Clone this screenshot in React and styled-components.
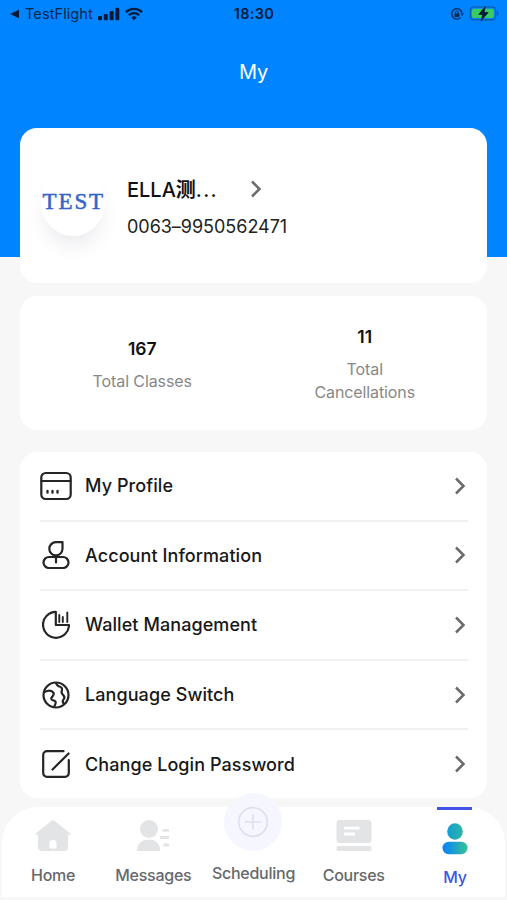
import React from "react";
import styled, { createGlobalStyle } from "styled-components";

const GlobalStyle = createGlobalStyle`
  *, *::before, *::after { box-sizing: border-box; }
  body { margin: 0; background: #f7f7f7; font-family: Inter, "Noto Sans CJK SC", sans-serif; }
  svg { display: block; flex: none; }
`;

const Screen = styled.main`
  width: 507px;
  height: 900px;
  overflow: hidden;
  display: flex;
  flex-direction: column;
  background: #f7f7f7;
`;

const Hero = styled.header`
  height: 257px;
  flex: none;
  background: #0084ff;
`;

const StatusBar = styled.div`
  height: 28px;
  padding: 0 8px 0 9px;
  display: grid;
  grid-template-columns: 1fr auto 1fr;
  align-items: center;
  color: #06264d;
`;

const StatusGroup = styled.div`
  display: flex;
  align-items: center;
  gap: ${(p) => p.$gap}px;
  justify-content: ${(p) => (p.$end ? "flex-end" : "flex-start")};
`;

const Carrier = styled.span`
  font-size: 14.5px;
  line-height: 28px;
  letter-spacing: 0.1px;
`;

const Clock = styled.span`
  font-size: 14.5px;
  font-weight: 600;
  line-height: 28px;
  letter-spacing: 0.35px;
  color: #031b38;
`;

const Title = styled.h1`
  margin: 32px 0 0;
  text-align: center;
  font-size: 20px;
  line-height: 25px;
  font-weight: 400;
  letter-spacing: -0.3px;
  color: #fff;
`;

const Card = styled.section`
  width: 467px;
  flex: none;
  margin: 0 auto;
  background: #fff;
  border-radius: 17px;
`;

const ProfileCard = styled(Card)`
  height: 155px;
  margin-top: -129px;
  padding: 42px 20px 0 21px;
  display: flex;
  align-items: flex-start;
`;

const Avatar = styled.div`
  width: 64px;
  height: 66px;
  border-radius: 50%;
  display: flex;
  align-items: center;
  justify-content: center;
  padding-bottom: 2px;
  background: #fff;
  box-shadow: 0 13px 18px -3px rgba(70, 80, 105, 0.1);
  font-family: "Liberation Serif", serif;
  font-size: 23px;
  letter-spacing: 1.9px;
  text-indent: 1.5px;
  color: #3464c8;
  -webkit-text-stroke: 0.5px #3464c8;
`;

const Identity = styled.div`
  margin: 6px 0 0 22px;
`;

const NameLine = styled.div`
  display: flex;
  align-items: center;
  height: 26px;
  gap: 29px;
`;

const Name = styled.span`
  width: 94px;
  padding-top: 1px;
  white-space: nowrap;
  font-size: 20px;
  font-weight: 500;
  line-height: 26px;
  color: #111;
`;

const NameHan = styled.span`
  font-family: "Noto Sans CJK SC", sans-serif;
  font-weight: 700;
`;

const NameDots = styled.span`
  letter-spacing: 1.3px;
`;

const Phone = styled.div`
  margin-top: 13px;
  font-size: 18px;
  line-height: 24px;
  letter-spacing: -0.03px;
  color: #222;
`;

const StatsCard = styled(Card)`
  height: 134px;
  margin-top: 13px;
  padding: 4px 11px 0;
  display: grid;
  grid-template-columns: 1fr 1fr;
  align-items: center;
`;

const Stat = styled.div`
  display: flex;
  flex-direction: column;
  align-items: center;
  text-align: center;
  gap: 10px;
`;

const StatValue = styled.strong`
  font-size: 17.5px;
  font-weight: 600;
  line-height: 22px;
  color: #111;
`;

const StatLabel = styled.span`
  width: 112px;
  font-size: 16px;
  line-height: 23px;
  letter-spacing: -0.1px;
  color: #888;
`;

const MenuCard = styled(Card)`
  height: 346px;
  margin-top: 22px;
  padding: 0 19px 0 20px;
`;

const MenuRow = styled.div`
  height: ${(p) => (p.$last ? "67.6px" : "69.6px")};
  padding-right: 2px;
  display: flex;
  align-items: center;
  border-bottom: ${(p) => (p.$last ? "0" : "2px")} solid #f1f1f1;
`;

const MenuIcon = styled.span`
  width: 32px;
  margin-right: 13px;
  display: flex;
  justify-content: center;
`;

const MenuLabel = styled.span`
  flex: 1;
  font-size: 18px;
  font-weight: 500;
  letter-spacing: 0.08px;
  color: #181818;
`;

const TabBar = styled.nav`
  width: 503px;
  height: 92px;
  flex: none;
  margin: 9px auto 0;
  padding: 0 1px;
  display: grid;
  grid-template-columns: repeat(5, 1fr);
  background: #fff;
  border-radius: 36px 36px 0 0;
  border-bottom: 2px solid #f8f8f8;
`;

const Tab = styled.div`
  display: flex;
  flex-direction: column;
  align-items: center;
  padding-top: ${(p) => p.$top || 0}px;
  padding-left: ${(p) => (p.$active ? 2 : 0)}px;
  color: ${(p) => (p.$active ? "#3855e5" : "#65686c")};
`;

const TabLabel = styled.span`
  margin-top: 12px;
  font-size: 16px;
  line-height: 20px;
  font-weight: 500;
  letter-spacing: -0.25px;
`;

const ActiveLine = styled.span`
  width: 35px;
  height: 3px;
  margin-bottom: 13px;
  background: #4054e6;
`;

const PlusDisc = styled.span`
  width: 58px;
  height: 58px;
  margin-top: -14px;
  border-radius: 50%;
  display: grid;
  place-items: center;
  background: #f5f6ff;
  flex: none;
`;

const Chevron = () => (
  <svg width="12" height="18" viewBox="0 0 12 18" fill="none" stroke="#6b6b6b" strokeWidth="2.5">
    <path d="M2 1.5 9.5 9 2 16.5" />
  </svg>
);

const line = { fill: "none", stroke: "#252525", strokeWidth: 2.2, strokeLinecap: "round", strokeLinejoin: "round" };

const CardIcon = () => (
  <svg width="32" height="30" viewBox="0 0 32 30" {...line}>
    <rect x="1.3" y="2" width="29.4" height="26" rx="4.5" />
    <path d="M1.5 10h29" />
    <path d="M7.5 20v1.7M12.5 20v1.7M17.5 20v1.7" strokeWidth="2.3" />
  </svg>
);

const AccountIcon = () => (
  <svg width="28" height="30" viewBox="0 0 28 30" {...line}>
    <path d="M20.5 2v6.800a6.600 6.600 0 1 1-6.600-6.600c2.400 0 4-.2 6.600-.2z" />
    <rect x="1.500" y="17" width="25" height="11" rx="5.500" />
    <path d="M14 17.500v5" />
  </svg>
);

const WalletIcon = () => (
  <svg width="28" height="30" viewBox="0 0 28 30" {...line}>
    <path d="M13.800 1.800A13 13 0 1 0 27 15H13.800z" />
    <path d="M17.300 5v7M20.800 7v5M25.300 2.500v9.500" strokeWidth="1.900" />
  </svg>
);

const GlobeIcon = () => (
  <svg width="28" height="30" viewBox="0 0 28 30" {...line}>
    <circle cx="14" cy="15" r="12.500" />
    <path d="M2.400 12C6 10.200 9.600 9.800 11.400 12.600c1.100 2-.2 3.300-1.500 4.500-1.600 1.600-.2 3 1.400 3.300 2.200.4 2.900 1.800 2.100 3.500l-1.200 3" />
    <path d="M14.200 3c.2 2.200 1.500 3 3.200 3.500 2.400.8 3.200 2.100 2.400 4.200-.7 2 .1 3.300 1.400 4.500 1.600 1.400 1.400 3.200.1 4.700-.8 1-.8 2 .2 3.500" />
  </svg>
);

const EditIcon = () => (
  <svg width="28" height="30" viewBox="0 0 28 30" {...line}>
    <path d="M21.500 2.200H5A3.800 3.800 0 0 0 1.200 6v18A3.800 3.800 0 0 0 5 27.800h18a3.800 3.800 0 0 0 3.800-3.800V11" />
    <path d="M10.500 20.500 26.600 4.500" />
  </svg>
);

const BackIcon = () => (
  <svg width="11" height="10" viewBox="0 0 11 10"><path d="M1 5 10 .8v8.400z" fill="#031b38" /></svg>
);

const SignalIcon = () => (
  <svg width="22" height="14" viewBox="0 0 22 14" fill="#031b38">
    <rect x="0" y="9" width="4" height="4.300" rx="1" />
    <rect x="5.800" y="7" width="4" height="6.300" rx="1" />
    <rect x="11.600" y="4" width="4" height="9.300" rx="1" />
    <rect x="17.300" y=".8" width="4" height="12.500" rx="1" />
  </svg>
);

const WifiIcon = () => (
  <svg width="18" height="14" viewBox="0 0 18 14" fill="none" stroke="#031b38" strokeWidth="2.300">
    <path d="M.9 5.200a11.500 11.500 0 0 1 16.200 0M3.800 8.200a7.400 7.400 0 0 1 10.400 0" />
    <path d="M9 13.200 6.200 10.500a4 4 0 0 1 5.600 0z" fill="#031b38" stroke="none" />
  </svg>
);

const LockIcon = () => (
  <svg width="14" height="14" viewBox="0 0 14 14" fill="none" stroke="#052a54" strokeWidth="1.300">
    <path d="M10.600 10.600A5.200 5.200 0 1 1 12.100 6.600" />
    <path d="m10.400 6.400 1.700 2.600 1.700-2.600z" fill="#052a54" stroke="none" />
    <rect x="4.400" y="6.300" width="5" height="3.600" rx=".6" fill="#052a54" stroke="none" />
    <path d="M5.400 6.500V5.400a1.500 1.500 0 0 1 3 0v1.100" strokeWidth="1" />
  </svg>
);

const BatteryIcon = () => (
  <svg width="30" height="16" viewBox="0 0 30 16">
    <rect x="1.200" y="1" width="25.500" height="12.800" rx="3.500" fill="none" stroke="#0b58a6" strokeWidth="1.200" />
    <rect x="2.900" y="2.700" width="22" height="9.400" rx="2" fill="#3bcb62" />
    <path d="M28 5.100c2 .7 2 3.900 0 4.600z" fill="#0b58a6" />
    <path d="m16.300.6-6.500 7.800h4.100l-1.700 6.200 6.900-8H15z" fill="#031b38" stroke="#031b38" strokeWidth=".8" />
  </svg>
);

const HomeIcon = () => (
  <svg width="36" height="34" viewBox="0 0 36 34" fill="#e3e4e6">
    <path d="M16.300 1.900a2.600 2.600 0 0 1 3.400 0L35 14.300c.9.8.3 1.700-.9 1.700H33v12.300a3.700 3.700 0 0 1-3.700 3.700H6.700A3.700 3.700 0 0 1 3 28.300V16H1.900C.7 16 .1 15.100 1 14.300z" />
    <path d="M14.500 29.500v-5.500a3.500 3 0 0 1 7 0v5.500z" fill="#fff" />
  </svg>
);

const MessagesIcon = () => (
  <svg width="34" height="34" viewBox="0 0 34 34" fill="#e3e4e6">
    <circle cx="13" cy="10" r="9" />
    <path d="M1 32c0-7 4.500-11.500 11.700-11.500S24.300 25 24.300 32z" />
    <path d="M26.500 11.300h6.500M24 18.500h9M27.500 26h5.500" stroke="#e3e4e6" strokeWidth="2.800" />
  </svg>
);

const CoursesIcon = () => (
  <svg width="36" height="34" viewBox="0 0 36 34" fill="#e3e4e6">
    <rect x=".5" y="1" width="35" height="23" rx="3.500" />
    <rect x=".5" y="27" width="35" height="5" rx="1.500" />
    <path d="M8 9.200h15.500M8 15h11" stroke="#fff" strokeWidth="2.800" />
  </svg>
);

const PlusIcon = () => (
  <svg width="32" height="32" viewBox="0 0 32 32" fill="none" stroke="#e0e1e8" strokeWidth="1.700">
    <circle cx="16" cy="16" r="14.300" />
    <path d="M8 16h16M16 8.500v15" />
  </svg>
);

const PersonIcon = () => (
  <svg width="26" height="32" viewBox="0 0 26 32">
    <defs>
      <linearGradient id="head" x1="0" x2="1"><stop stopColor="#149dd4" /><stop offset="1" stopColor="#2eb5a1" /></linearGradient>
      <linearGradient id="body" x1="0" x2="1"><stop stopColor="#087fff" /><stop offset="1" stopColor="#36c393" /></linearGradient>
    </defs>
    <ellipse cx="13" cy="8.500" rx="7.800" ry="8.300" fill="url(#head)" />
    <rect x=".5" y="18.800" width="25" height="12.500" rx="6.200" fill="url(#body)" />
  </svg>
);

const menu = [
  { label: "My Profile", Icon: CardIcon },
  { label: "Account Information", Icon: AccountIcon },
  { label: "Wallet Management", Icon: WalletIcon },
  { label: "Language Switch", Icon: GlobeIcon },
  { label: "Change Login Password", Icon: EditIcon },
];

export default function App() {
  return (
    <>
      <GlobalStyle />
      <Screen>
        <Hero>
          <StatusBar>
            <StatusGroup $gap={5}>
              <BackIcon />
              <Carrier>TestFlight</Carrier>
              <SignalIcon />
              <WifiIcon />
            </StatusGroup>
            <Clock>18:30</Clock>
            <StatusGroup $gap={5} $end>
              <LockIcon />
              <BatteryIcon />
            </StatusGroup>
          </StatusBar>
          <Title>My</Title>
        </Hero>
        <ProfileCard>
          <Avatar>TEST</Avatar>
          <Identity>
            <NameLine>
              <Name>ELLA<NameHan>测</NameHan><NameDots>...</NameDots></Name>
              <Chevron />
            </NameLine>
            <Phone>0063–9950562471</Phone>
          </Identity>
        </ProfileCard>
        <StatsCard>
          <Stat>
            <StatValue>167</StatValue>
            <StatLabel>Total Classes</StatLabel>
          </Stat>
          <Stat>
            <StatValue>11</StatValue>
            <StatLabel>Total Cancellations</StatLabel>
          </Stat>
        </StatsCard>
        <MenuCard>
          {menu.map(({ label, Icon }, i) => (
            <MenuRow key={label} $last={i === menu.length - 1}>
              <MenuIcon><Icon /></MenuIcon>
              <MenuLabel>{label}</MenuLabel>
              <Chevron />
            </MenuRow>
          ))}
        </MenuCard>
        <TabBar>
          <Tab $top={12}><HomeIcon /><TabLabel>Home</TabLabel></Tab>
          <Tab $top={12}><MessagesIcon /><TabLabel>Messages</TabLabel></Tab>
          <Tab><PlusDisc><PlusIcon /></PlusDisc><TabLabel>Scheduling</TabLabel></Tab>
          <Tab $top={12}><CoursesIcon /><TabLabel>Courses</TabLabel></Tab>
          <Tab $active><ActiveLine /><PersonIcon /><TabLabel>My</TabLabel></Tab>
        </TabBar>
      </Screen>
    </>
  );
}
